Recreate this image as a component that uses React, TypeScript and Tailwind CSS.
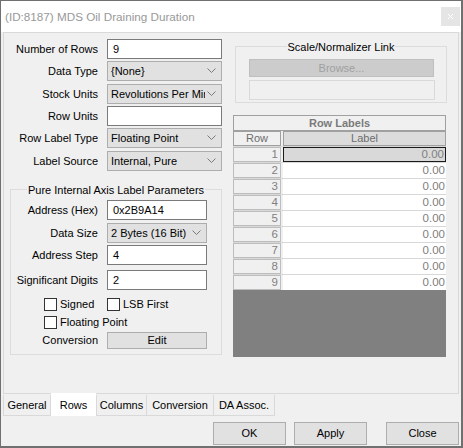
import React from "react";

const font = { fontFamily: '"Liberation Sans", Arial, sans-serif' };

const Chevron = () => (
  <svg width="9" height="6" viewBox="0 0 9 6" className="shrink-0">
    <polyline points="0.5,0.5 4.5,4.5 8.5,0.5" fill="none" stroke="#7a7a7a" strokeWidth="1" />
  </svg>
);

const TextBox = ({ value, w }: { value: string; w: string }) => (
  <div className={`${w} h-[20px] bg-white border border-[#7a7a7a] flex items-center pl-[5px] text-black`}>
    {value}
  </div>
);

const Select = ({ value, w }: { value: string; w: string }) => (
  <div className={`${w} h-[20px] bg-[#e1e1e1] border border-[#adadad] flex items-center pl-[3px] pr-[5px] gap-[2px]`}>
    <span className="flex-1 overflow-hidden whitespace-nowrap text-black">{value}</span>
    <Chevron />
  </div>
);

const Check = ({ label }: { label: string }) => (
  <div className="flex items-center gap-[3px] h-[13px]">
    <div className="w-[13px] h-[13px] bg-white border border-[#333333]" />
    <span className="leading-[13px]">{label}</span>
  </div>
);

const FormRow = ({ label, labelW, mt, children }: { label: string; labelW: string; mt: string; children: React.ReactNode }) => (
  <div className={`flex items-center ${mt}`}>
    <div className={`${labelW} text-right whitespace-nowrap text-black`}>{label}</div>
    <div className="ml-[9px]">{children}</div>
  </div>
);

const rows = [1, 2, 3, 4, 5, 6, 7, 8, 9];

export default function App() {
  return (
    <div
      className="w-[463px] h-[448px] bg-[#f0f0f0] border-l border-t border-r-2 border-b-2 border-[#707070] flex flex-col text-[11px] overflow-hidden"
      style={font}
    >
      {/* title bar */}
      <div className="h-[31px] bg-white flex items-center justify-between pl-[4px] pr-[1px] shrink-0">
        <span className="text-[11.7px] text-[#999999]">(ID:8187) MDS Oil Draining Duration</span>
        <div className="w-[19px] h-[19px] bg-[#e5e5e5] flex items-center justify-center">
          <svg width="7" height="7" viewBox="0 0 7 7">
            <path d="M1 1 L6 6 M6 1 L1 6" stroke="#ffffff" strokeWidth="1" />
          </svg>
        </div>
      </div>

      {/* tab page */}
      <div className="mx-[2px] h-[362px] border border-[#d9d9d9] bg-[#f0f0f0] flex shrink-0">
        {/* left column */}
        <div className="w-[224px] pt-[6px]">
          <FormRow label="Number of Rows" labelW="w-[94px]" mt="mt-0">
            <TextBox value="9" w="w-[115px]" />
          </FormRow>
          <FormRow label="Data Type" labelW="w-[94px]" mt="mt-[2px]">
            <Select value="{None}" w="w-[115px]" />
          </FormRow>
          <FormRow label="Stock Units" labelW="w-[94px]" mt="mt-[3px]">
            <Select value="Revolutions Per Minute" w="w-[115px]" />
          </FormRow>
          <FormRow label="Row Units" labelW="w-[94px]" mt="mt-[2px]">
            <TextBox value="" w="w-[115px]" />
          </FormRow>
          <FormRow label="Row Label Type" labelW="w-[94px]" mt="mt-[2px]">
            <Select value="Floating Point" w="w-[115px]" />
          </FormRow>
          <FormRow label="Label Source" labelW="w-[94px]" mt="mt-[3px]">
            <Select value="Internal, Pure" w="w-[115px]" />
          </FormRow>

          <div className="relative ml-[6px] mt-[18px] w-[212px] h-[166px] border border-[#dcdcdc] pt-[10px]">
            <div className="absolute -top-[8px] left-0 right-0 flex justify-center">
              <span className="bg-[#f0f0f0] px-[1px] text-black">Pure Internal Axis Label Parameters</span>
            </div>
            <FormRow label="Address (Hex)" labelW="w-[87px]" mt="mt-0">
              <TextBox value="0x2B9A14" w="w-[100px]" />
            </FormRow>
            <FormRow label="Data Size" labelW="w-[87px]" mt="mt-[3px]">
              <Select value="2 Bytes (16 Bit)" w="w-[100px]" />
            </FormRow>
            <FormRow label="Address Step" labelW="w-[87px]" mt="mt-[2px]">
              <TextBox value="4" w="w-[100px]" />
            </FormRow>
            <FormRow label="Significant Digits" labelW="w-[87px]" mt="mt-[5px]">
              <TextBox value="2" w="w-[100px]" />
            </FormRow>
            <div className="flex mt-[8px]">
              <div className="w-[96px] pl-[33px]">
                <Check label="Signed" />
              </div>
              <Check label="LSB First" />
            </div>
            <div className="flex mt-[5px] pl-[33px]">
              <Check label="Floating Point" />
            </div>
            <FormRow label="Conversion" labelW="w-[87px]" mt="mt-[3px]">
              <div className="w-[100px] h-[17px] bg-[#e1e1e1] border border-[#adadad] flex items-center justify-center text-black">
                Edit
              </div>
            </FormRow>
          </div>
        </div>

        {/* right column */}
        <div className="w-[230px] pt-[13px]">
          <div className="relative ml-[7px] w-[212px] h-[57px] border border-[#dcdcdc] pt-[12px] pl-[13px]">
            <div className="absolute -top-[8px] left-0 right-0 flex justify-center">
              <span className="bg-[#f0f0f0] px-[1px] text-black">Scale/Normalizer Link</span>
            </div>
            <div className="w-[185px] h-[18px] bg-[#cccccc] border border-[#bfbfbf] flex items-center justify-center text-[#a0a0a0]">
              Browse...
            </div>
            <div className="mt-[3px] w-[186px] h-[20px] bg-[#f0f0f0] border border-[#d9d9d9]" />
          </div>

          <div className="ml-[5px] mt-[12px] w-[213px]">
            <div className="h-[16px] border border-[#a0a0a0] bg-[#f0f0f0] flex items-center justify-center font-bold text-[#7a7a7a]">
              Row Labels
            </div>
            <div className="flex h-[15px] gap-[2px]">
              <div className="w-[48px] border border-[#a0a0a0] bg-[#f0f0f0] flex items-center justify-center text-[#6d6d6d]">
                Row
              </div>
              <div className="flex-1 border border-[#a0a0a0] bg-[#dcdcdc] flex items-center justify-center text-[#6d6d6d]">
                Label
              </div>
            </div>
            {rows.map((r) => (
              <div key={r} className="flex h-[16px] gap-[2px] border-t border-[#d8d8d8] text-[11.5px]">
                <div className="w-[48px] border border-[#bdbdbd] bg-[#f0f0f0] flex items-center justify-end pr-[2px] text-[#808080]">
                  {r}
                </div>
                <div
                  className={`flex-1 flex items-center justify-end pr-[1px] text-[#808080] ${
                    r === 1 ? "bg-[#d9d9d9] border border-[#1a1a1a]" : "bg-white"
                  }`}
                >
                  0.00
                </div>
              </div>
            ))}
            <div className="h-[67px] bg-[#808080]" />
          </div>
        </div>
      </div>

      {/* tabs */}
      <div className="flex ml-[2px] mt-[1px] h-[21px] shrink-0 text-black">
        <div className="w-[48px] border border-[#d9d9d9] border-t-0 flex items-center justify-center">General</div>
        <div className="w-[45px] -mt-[2px] h-[23px] bg-white flex items-center justify-center pt-[2px]">Rows</div>
        <div className="w-[51px] border border-[#d9d9d9] border-t-0 flex items-center justify-center">Columns</div>
        <div className="w-[67px] border border-l-0 border-[#d9d9d9] border-t-0 flex items-center justify-center">Conversion</div>
        <div className="w-[61px] border border-l-0 border-[#d9d9d9] border-t-0 flex items-center justify-center">DA Assoc.</div>
      </div>

      {/* buttons */}
      <div className="flex justify-end mt-[6px] pr-[2px] gap-[8px] shrink-0 text-black">
        <div className="w-[73px] h-[23px] bg-[#e1e1e1] border border-[#adadad] flex items-center justify-center">OK</div>
        <div className="w-[73px] h-[23px] bg-[#e1e1e1] border border-[#adadad] flex items-center justify-center mr-[11px]">Apply</div>
        <div className="w-[73px] h-[23px] bg-[#e1e1e1] border border-[#adadad] flex items-center justify-center">Close</div>
      </div>
    </div>
  );
}
